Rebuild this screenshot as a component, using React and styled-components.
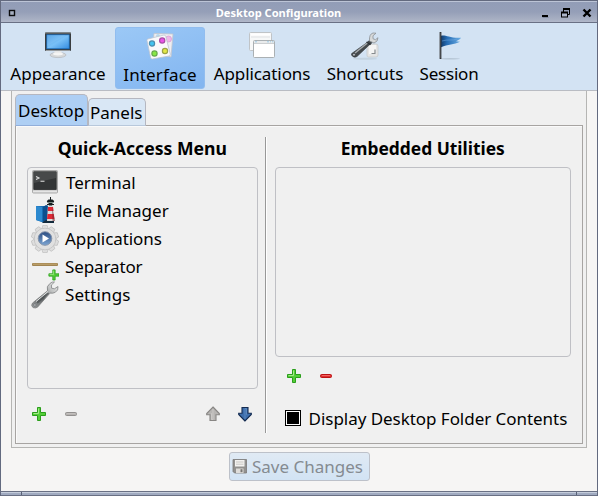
import React from "react";
import styled, { createGlobalStyle } from "styled-components";

const GlobalStyle = createGlobalStyle`
  * { box-sizing: border-box; }
  body { margin: 0; overflow: hidden; }
  svg { display: block; flex: none; }
`;

const Window = styled.div`
  width: 598px;
  height: 496px;
  display: flex;
  flex-direction: column;
  border: solid #636a7f;
  border-width: 1px 1px 0;
  background: #f6f5f4;
  color: #000;
  font: 17px/24px "Noto Sans", sans-serif;
  white-space: nowrap;
`;

const TitleBar = styled.header`
  height: 22px;
  flex: none;
  display: flex;
  align-items: center;
  padding: 2px 4px 0 7px;
  border-top: 1px solid #bcc4d6;
  border-bottom: 1px solid #697084;
  background: linear-gradient(#929db7, #959fb8 50%, #a9b1c4 90%, #b2b9ca);
`;

const WindowTitle = styled.h1`
  flex: 1;
  margin: 0;
  padding: 0 0 1px 2px;
  text-align: center;
  color: #fff;
  font-size: 11.1px;
  line-height: 18px;
  font-weight: 700;
`;

const WindowButtons = styled.div`
  display: flex;
  gap: 9px;
`;

const ToolBar = styled.nav`
  height: 68px;
  flex: none;
  display: flex;
  align-items: flex-start;
  padding: 4px 0 0 4px;
  border-bottom: 1px solid #b9bcc3;
  background: #d3e3f3;
`;

const ToolButton = styled.button`
  width: ${(p) => p.$width}px;
  height: 62px;
  margin: 0 ${(p) => p.$gap}px 0 0;
  padding: ${(p) => (p.$active ? 5 : 4)}px 0 0;
  display: flex;
  flex-direction: column;
  align-items: center;
  gap: 2px;
  border: 1px solid ${(p) => (p.$active ? "#91bdef" : "transparent")};
  border-radius: 3px;
  background: ${(p) => (p.$active ? "linear-gradient(160deg, #9bc8f6, #82b5f0)" : "transparent")};
  color: inherit;
  font: inherit;
  letter-spacing: ${(p) => p.$spacing || 0}px;
`;

const Notebook = styled.main`
  width: 576px;
  height: 357px;
  flex: none;
  margin-left: 10px;
  padding: 3px 3px 0;
  border: solid #b5b5b3;
  border-width: 0 1px 1px;
  background: #f0f0f0;
`;

const TabStrip = styled.div`
  display: flex;
  align-items: flex-end;
  height: 32px;
  margin-bottom: -1px;
`;

const Tab = styled.button`
  width: ${(p) => p.$width}px;
  height: ${(p) => (p.$active ? 32 : 28)}px;
  padding: ${(p) => (p.$active ? "4px 0 0 2px" : "2px 0 0 1px")};
  border: 1px solid #b5b7c0;
  border-bottom-color: ${(p) => (p.$active ? "#91aeda" : "#b8c8db")};
  border-radius: 5px 5px 0 0;
  background: ${(p) => (p.$active ? "#aecff4" : "#d9e7f5")};
  color: inherit;
  font: inherit;
  line-height: 24px;
  text-align: left;
  display: flex;
  align-items: flex-start;
`;

const TabPage = styled.section`
  width: 568px;
  height: 319px;
  display: flex;
  padding: 11px;
  border: 1px solid #a7a4a2;
  box-shadow: inset 1px 1px #fafafa;
`;

const Column = styled.div`
  width: ${(p) => p.$width}px;
  display: flex;
  flex-direction: column;
`;

const Heading = styled.h2`
  height: 30px;
  margin: 0;
  font: 700 ${(p) => p.$size}px/22px "Noto Sans", sans-serif;
  text-align: center;
`;

const ListBox = styled.ul`
  height: ${(p) => p.$height}px;
  margin: 0;
  padding: 1px 3px;
  border: 1px solid #bfc0c5;
  border-radius: 4px;
  list-style: none;
`;

const ListItem = styled.li`
  height: 28px;
  display: flex;
  align-items: center;
  gap: ${(p) => p.$gap || 6}px;
  letter-spacing: ${(p) => p.$spacing || 0}px;
`;

const ListTools = styled.div`
  display: flex;
  align-items: center;
  height: 16px;
  margin-top: ${(p) => p.$top}px;
  padding: 0 5px 0 ${(p) => p.$left}px;
  gap: 16px;
`;

const Spacer = styled.span`
  flex: 1;
`;

const Divider = styled.div`
  width: 2px;
  height: 296px;
  margin: 0 8px 0 7px;
  border-left: 1px solid #989898;
  background: #fff;
`;

const CheckRow = styled.label`
  display: flex;
  align-items: center;
  height: 24px;
  margin-top: 23px;
  padding-left: 10px;
  gap: 8px;
  letter-spacing: -0.04px;
`;

const CheckBox = styled.span`
  width: 16px;
  height: 16px;
  margin-top: -2px;
  border: 1px solid #000;
  background: #000;
  box-shadow: inset 0 0 0 1px #fff;
`;

const SaveButton = styled.button`
  width: 141px;
  height: 29px;
  flex: none;
  margin: 4px 0 0 228px;
  padding: 0 0 0 2px;
  display: flex;
  align-items: center;
  gap: 5px;
  border: 1px solid #bdc1c9;
  border-radius: 3px;
  background: linear-gradient(#e0eaf4, #d2e3f4);
  color: #858b91;
  font: inherit;
`;

const ResizeBar = styled.footer`
  height: 5px;
  margin: auto 0 0;
  flex: none;
  display: grid;
  grid-template-columns: 21px 1fr 21px;
  border: solid #697084;
  border-width: 1px 0;
  background: #a0aac0;
  box-shadow: inset 0 1px #c5cddb;
`;

const Grip = styled.span`
  border: solid #596176;
  border-width: ${(p) => (p.$right ? "0 0 0 1px" : "0 1px 0 0")};
`;

const MonitorIcon = () => (
  <svg width="28" height="28" viewBox="0 0 28 28">
    <defs><linearGradient id="screen" x2="1" y2="1"><stop stopColor="#4a9ce2" /><stop offset=".5" stopColor="#79c0f6" /><stop offset="1" stopColor="#338ce0" /></linearGradient></defs>
    <ellipse cx="14" cy="23" rx="8" ry="2.6" fill="#d7d9da" stroke="#b5b8bb" strokeWidth=".7" />
    <path d="M11 17h6l1 6h-8z" fill="#e6e7e7" />
    <ellipse cx="14" cy="22" rx="5" ry="1.4" fill="#f5f5f4" />
    <rect x="1" y=".5" width="26" height="18.5" rx="1" fill="#393d3f" />
    <path d="M1 1h26" stroke="#777c7f" />
    <path d="M2 18.5h24" stroke="#999d9f" />
    <rect x="2.8" y="2.8" width="22.4" height="14" fill="url(#screen)" stroke="#1268ba" strokeWidth=".7" />
    <path d="M3 3h19L3 14z" fill="#a0d3fb" opacity=".2" />
  </svg>
);

const CardsIcon = () => (
  <svg width="28" height="28" viewBox="0 0 28 28">
    <g strokeWidth=".8">
      <path d="m8 .4 19 .6-2 23L6 19z" fill="#eeedf1" stroke="#c2c5ce" />
      <circle cx="22.5" cy="6" r="3" fill="#efb8e8" stroke="#d79fd3" />
      <circle cx="12" cy="3" r="2" fill="#b8d9ec" />
      <path d="m1.9 6 16-4q1.4-.2 1.8 1.2l4.6 18q.2 1.4-1.2 1.8L6.5 26q-1.4.3-1.8-1L1 7.6Q.8 6.2 1.9 6z" fill="#faf9fb" stroke="#bdc5d0" />
    </g>
    <g strokeWidth="1.2">
      <circle cx="6" cy="10.5" r="2.6" fill="#43c4f0" stroke="#498dae" />
      <circle cx="16.2" cy="7.5" r="2.6" fill="#e954e7" stroke="#a84ba6" />
      <circle cx="8.5" cy="20.5" r="2.6" fill="#87e744" stroke="#66aa49" />
      <circle cx="19" cy="18" r="2.6" fill="#e2e846" stroke="#9ba348" />
    </g>
  </svg>
);

const WindowsIcon = () => (
  <svg width="28" height="28" viewBox="0 0 28 28">
    <g fill="#f7f8f8" stroke="#c0c4c7">
      <rect x="1.5" y=".5" width="22" height="18" rx="1" />
      <path d="M3 2.5h19" stroke="#fff" strokeWidth="2" /><path d="M3 5h19" stroke="#dfe1e3" />
      <rect x="5.5" y="8.5" width="21" height="17" rx="1" fill="#fff" stroke="#aab0b3" />
    </g>
    <path d="M6 10h20" stroke="#e9ebec" strokeWidth="2" /><path d="M6 11.5h20" stroke="#cccfd1" />
    <path d="M7 9.8h2m10 0h2m1 0h1m1 0h1.5" stroke="#9ecae5" strokeWidth="1" />
  </svg>
);

const WrenchIcon = () => (
  <svg width="28" height="28" viewBox="0 0 28 28">
    <defs><linearGradient id="steel" x1="1" x2="0" y2="1"><stop stopColor="#f0f0f0" /><stop offset=".3" stopColor="#bfc1c1" /><stop offset=".6" stopColor="#626668" /><stop offset="1" stopColor="#9a9d9e" /></linearGradient></defs>
    <path d="m1.5 22 15-12.2q-1.5-4.5 2.4-7.3Q21 .4 23.5 1L20.4 4l.2 3.2 2.8.6 3.6-2.3q.6 4-2.7 5.8-2.4 1.4-5.2.8L6.5 26.2q-2 1.4-4.5.4-2.4-2-.5-4.6z" fill="url(#steel)" stroke="#77797a" strokeWidth=".7" />
    <path d="M6 21.8 17.5 12" fill="none" stroke="#45494b" strokeWidth="2" opacity=".65" />
    <path d="m5 20.5 12-10" stroke="#e4e6e6" strokeWidth="1" />
    <circle cx="3.9" cy="24" r="1.1" fill="#e5e7e7" stroke="#63676b" strokeWidth=".7" />
  </svg>
);

const ShortcutIcon = () => (
  <svg width="28" height="28" viewBox="0 0 28 28">
    <ellipse cx="14" cy="26.7" rx="12" ry="1" fill="#b9c8d4" opacity=".6" />
    <path d="M16 14q0-2 2-2h7q2 0 2 2v9q0 2-2 2h-8q-1 0-1-2z" fill="#e4e5e5" stroke="#c7caca" strokeWidth=".8" />
    <path d="M18 13h7v9h-7z" fill="#f5f5f4" />
    <path d="M20.5 21.5H24v-4" fill="none" stroke="#878b8d" strokeWidth="1.2" />
    <path d="m.7 21.5 15.5-11q1-2 3-2l2 1q0 2-3 3.5L6 24.5q-2 1.5-4.2 0-2-1.5-1.1-3z" fill="#44494c" stroke="#34393c" strokeWidth=".6" />
    <path d="M4 21 17 10.5" stroke="#a8acae" strokeWidth="1.4" />
    <path d="M18.5 9q-.5-7 3.5-8l3 .2-3 2.5v3l2.5 1 2.5-2q0 4-4 5.3z" fill="#d8dada" stroke="#8a9195" strokeWidth=".8" />
    <path d="m15.5 10 4 2.7" stroke="#303437" strokeWidth="1.5" />
    <circle cx="3" cy="22.8" r="1.3" fill="#d9dfe3" stroke="#292c2d" strokeWidth=".6" />
  </svg>
);

const FlagIcon = () => (
  <svg width="28" height="28" viewBox="0 0 28 28">
    <defs><linearGradient id="flag"><stop stopColor="#123c6c" /><stop offset=".3" stopColor="#256cb4" /><stop offset="1" stopColor="#6caee4" /></linearGradient></defs>
    <ellipse cx="15" cy="26.8" rx="10" ry=".7" fill="#b7c7d6" />
    <path d="M6 3.8c5-1 8 2.5 20 2-1 2-3 2.3-5 3.5l4 .5c-6 3-12 2.5-19 5.5z" fill="url(#flag)" />
    <path d="M7 9c6-2 10 0 15-2" stroke="#75ade3" strokeWidth="1" fill="none" opacity=".5" />
    <path d="M5.5 0v27" stroke="#333638" strokeWidth="1.8" /><path d="M4.8 1v25" stroke="#949a9d" strokeWidth=".6" />
  </svg>
);

const TerminalIcon = () => (
  <svg width="28" height="28" viewBox="0 0 28 28">
    <rect x="1.5" y="1.5" width="25" height="22.5" rx="1" fill="#c9c9c9" stroke="#a9a9a9" />
    <path d="M2 22.5h24" stroke="#e5e5e5" strokeWidth="1.5" />
    <rect x="2.8" y="2.8" width="22.4" height="17.7" fill="#333536" stroke="#202122" strokeWidth=".7" />
    <path d="M3 3h22v6L3 14z" fill="#66696a" opacity=".4" />
    <path d="m5 7.5 3 1.5-3 1.5m4.5 1.7h4" stroke="#e0e0e0" strokeWidth="1.1" fill="none" />
  </svg>
);

const LighthouseIcon = () => (
  <svg width="28" height="28" viewBox="0 0 28 28">
    <path d="m5 9 13 0v16l-6 .5-7-2.5z" fill="#176bb0" />
    <path d="m5 9 6 1v14.7L5 23z" fill="#2c89cf" /><path d="m15 8 3 1v13l-6 3V10z" fill="#0c4f8e" />
    <path d="M12 25q4-4 11-1v2H11z" fill="#142b3d" />
    <path d="M17 8h5l2 16h-8z" fill="#ddd" />
    <path d="M17 10h5l.6 4h-5.9zM16.5 17h6.3l.6 5h-7.4z" fill="#df2936" />
    <path d="M21 9 24 24h-2.5z" fill="#75242b" opacity=".55" />
    <path d="M16 7.5h7M17.2 3h4.6l1 2h-6.6zM18 5h3v3h-3zM19.5 0v3" fill="#171e20" stroke="#171e20" strokeWidth="1" />
    <path d="M17.3 5.5h4.5" stroke="#a6c2b9" strokeWidth=".7" />
  </svg>
);

const GearIcon = () => (
  <svg width="28" height="28" viewBox="0 0 28 28">
    <defs><linearGradient id="hub" x2="0" y2="1"><stop stopColor="#2b4c80" /><stop offset="1" stopColor="#7ba5d3" /></linearGradient></defs>
    <g fill="#dedede" stroke="#bdbdbd" strokeWidth=".7">
      {[0, 36, 72, 108, 144, 180, 216, 252, 288, 324].map((a) => <path key={a} d="m10.8 4 1-3.6h4.4l1 3.6z" transform={`rotate(${a} 14 14)`} />)}
      <circle cx="14" cy="14" r="10.8" />
    </g>
    <circle cx="14" cy="14" r="10.2" fill="#e0e0e0" />
    <circle cx="14" cy="13.5" r="6.8" fill="url(#hub)" stroke="#8493aa" strokeWidth="1" />
    <path d="m11.5 9.5 6.5 4-6.5 4z" fill="#fff" />
  </svg>
);

const PlusPath = () => (
  <><path d="M5.5.5h3v5h5v3h-5v5h-3v-5h-5v-3h5z" fill="#54ce37" stroke="#2b9e1c" strokeWidth="1" strokeLinejoin="round" /><path d="M6.5 1.5v5h-5" fill="none" stroke="#a4ea88" /></>
);

const PlusIcon = () => <svg width="16" height="16" viewBox="-1 -1 16 16"><PlusPath /></svg>;

const SeparatorIcon = () => (
  <svg width="28" height="28" viewBox="0 0 28 28">
    <rect x="1" y="10" width="26" height="3" rx="1" fill="#a18451" /><path d="M2 11.2h24" stroke="#ceb27c" strokeWidth=".8" />
    <g transform="translate(17.5 16.5) scale(.78)"><PlusPath /></g>
  </svg>
);

const MinusIcon = ({ red }) => (
  <svg width="16" height="16" viewBox="0 0 16 16">
    <rect x="2.5" y="6.5" width="11" height="3" rx="1" fill={red ? "#dd2d2e" : "#b6b3b1"} stroke={red ? "#bb1113" : "#92908f"} />
    <path d="M4 7.5h8" stroke={red ? "#f26563" : "#c3c0be"} />
  </svg>
);

const ArrowIcon = ({ down }) => (
  <svg width="16" height="16" viewBox="0 0 16 16">
    <g transform={down ? "rotate(180 8 8)" : undefined}>
      <path d="m8 1 6.3 6.5v1.2H11V14.5H5V8.7H1.7V7.5z" fill={down ? "#3d6dab" : "#b7b5b3"} stroke={down ? "#142b50" : "#888684"} strokeWidth="1.1" />
      <path d="M8 3v10.5H6.5V7.2" fill="none" stroke={down ? "#5b88bf" : "#cac8c6"} strokeWidth="1" />
    </g>
  </svg>
);

const SaveIcon = () => (
  <svg width="15" height="15" viewBox="0 0 15 15">
    <path d="M1 .5h13.5v13.5H2.5L1 12.5z" fill="#92918f" stroke="#7b7977" strokeWidth=".8" />
    <path d="M3 1h9.5v6.5H3z" fill="#f3f2f0" /><path d="M4 3h7.5m-7.5 2.2h7.5" stroke="#c9c7c4" />
    <path d="M4 9.5h7.5V14H4z" fill="#dedcd9" /><path d="M8.5 10.2h2v3h-2z" fill="#777573" />
  </svg>
);

const WindowMenuIcon = () => (
  <svg width="8" height="8" viewBox="0 0 8 8"><rect x="1.5" y="1.5" width="5" height="5" fill="#a6afc1" stroke="#0b0c0e" strokeWidth="1.4" /></svg>
);

const WindowControls = () => (
  <WindowButtons>
    <svg width="12" height="12" viewBox="0 0 12 12"><path d="M3.5 10.5h6" stroke="#6d7589" opacity=".6" /><path d="M3 9h6" stroke="#000" strokeWidth="2" /></svg>
    <svg width="12" height="12" viewBox="0 0 12 12"><path d="M3.5 5V2.5h6v5H8" fill="none" stroke="#000" /><path d="M3 2h7" stroke="#000" strokeWidth="2" /><rect x="1.5" y="5.5" width="6" height="4.5" fill="#adb6ca" stroke="#000" /><path d="M1 5.5h7" stroke="#000" strokeWidth="2" /></svg>
    <svg width="12" height="12" viewBox="0 0 12 12"><path d="m2.5 2.5 7 7m0-7-7 7" stroke="#000" strokeWidth="2.4" /></svg>
  </WindowButtons>
);

export default function App() {
  return (
    <>
      <GlobalStyle />
      <Window>
        <TitleBar>
          <WindowMenuIcon />
          <WindowTitle>Desktop Configuration</WindowTitle>
          <WindowControls />
        </TitleBar>
        <ToolBar>
          <ToolButton $width={106} $gap={4}><MonitorIcon />Appearance</ToolButton>
          <ToolButton $width={90} $gap={4} $spacing={0.15} $active><CardsIcon />Interface</ToolButton>
          <ToolButton $width={106} $gap={6} $spacing={-0.08}><WindowsIcon />Applications</ToolButton>
          <ToolButton $width={88} $gap={6} $spacing={0.05}><ShortcutIcon />Shortcuts</ToolButton>
          <ToolButton $width={68} $gap={0} $spacing={-0.2}><FlagIcon />Session</ToolButton>
        </ToolBar>
        <Notebook>
          <TabStrip>
            <Tab $width={73} $active>Desktop</Tab>
            <Tab $width={58}>Panels</Tab>
          </TabStrip>
          <TabPage>
            <Column $width={231}>
              <Heading $size={17.6}>Quick-Access Menu</Heading>
              <ListBox $height={222}>
                <ListItem $gap={7}><TerminalIcon />Terminal</ListItem>
                <ListItem><LighthouseIcon />File Manager</ListItem>
                <ListItem $spacing={-0.08}><GearIcon />Applications</ListItem>
                <ListItem $spacing={-0.12}><SeparatorIcon />Separator</ListItem>
                <ListItem $spacing={0.1}><WrenchIcon />Settings</ListItem>
              </ListBox>
              <ListTools $top={17} $left={4}>
                <PlusIcon /><MinusIcon /><Spacer /><ArrowIcon /><ArrowIcon down />
              </ListTools>
            </Column>
            <Divider />
            <Column $width={297}>
              <Heading $size={17.4}>Embedded Utilities</Heading>
              <ListBox $height={190} />
              <ListTools $top={11} $left={11}><PlusIcon /><MinusIcon red /></ListTools>
              <CheckRow><CheckBox />Display Desktop Folder Contents</CheckRow>
            </Column>
          </TabPage>
        </Notebook>
        <SaveButton disabled><SaveIcon />Save Changes</SaveButton>
        <ResizeBar><Grip /><span /><Grip $right /></ResizeBar>
      </Window>
    </>
  );
}
